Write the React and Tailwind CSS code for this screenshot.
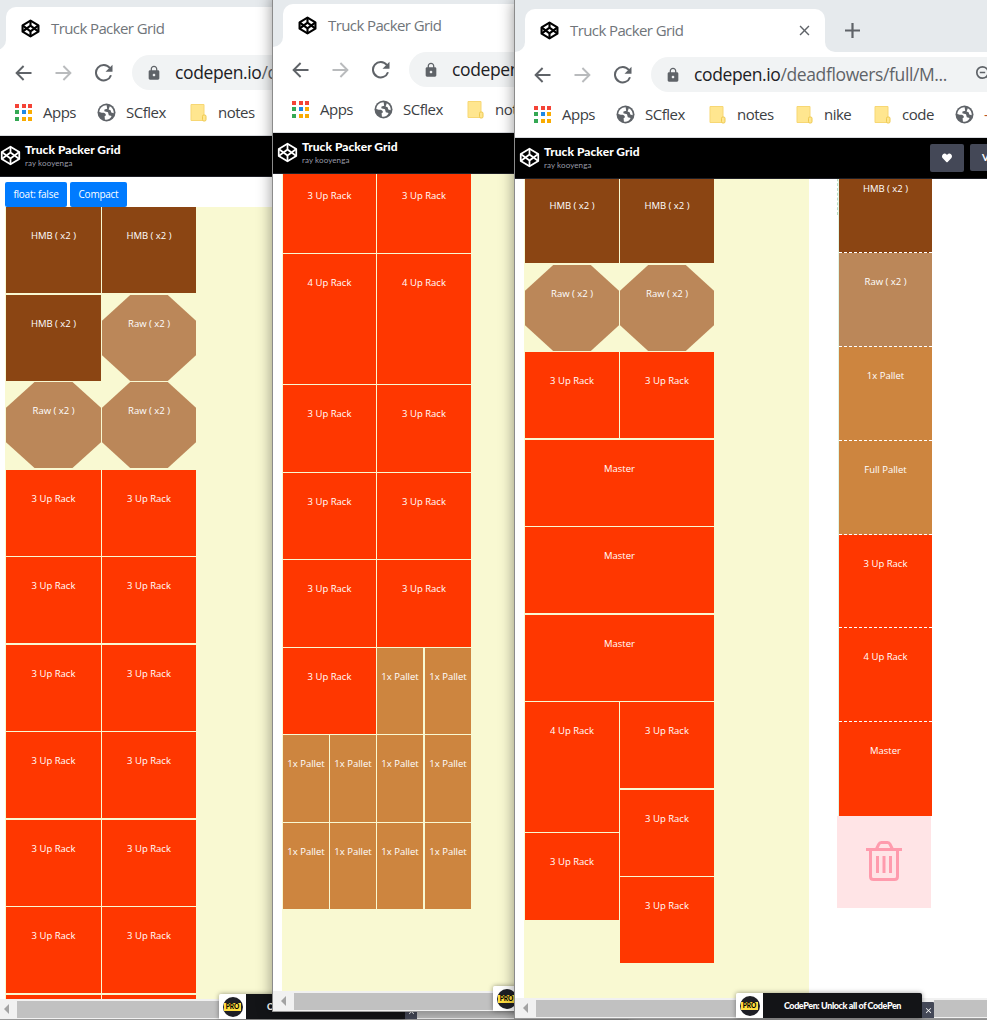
import React from "react";
import { MdLock, MdClose } from "react-icons/md";
import { FaHeart } from "react-icons/fa";

const APP_COLORS = [
  "bg-[#f44336]", "bg-[#f44336]", "bg-[#f44336]",
  "bg-[#34a853]", "bg-[#1e88e5]", "bg-[#f9ab00]",
  "bg-[#34a853]", "bg-[#f9ab00]", "bg-[#f9ab00]",
];

function AppsIcon() {
  return (
    <div className="grid w-[17px] shrink-0 grid-cols-3 gap-[2.5px]">
      {APP_COLORS.map((c, i) => (
        <span key={i} className={`size-[4px] ${c}`} />
      ))}
    </div>
  );
}

function Logo({ className, weight }) {
  return (
    <svg className={`shrink-0 ${className}`} viewBox="0 0 24 24" fill="none" stroke="currentColor" strokeWidth={weight} strokeLinejoin="round">
      <path d="M12 2 22 8 22 16 12 22 2 16 2 8Z" />
      <path d="M12 22V15.5M22 8 12 15.5 2 8M2 16 12 8.5 22 16M12 2V8.5" />
    </svg>
  );
}

function GlobeIcon() {
  return (
    <svg className="size-[19px] shrink-0" viewBox="0 0 19 19">
      <circle cx="9.5" cy="9.5" r="9" fill="#5f6368" />
      <path
        d="M9.6 2.3C5.6 2.2 2.5 5.200 2.300 9.100L4.800 9.700C7.100 9.600 8.700 10.100 9 12.300L7.600 13.300 7.900 16.500C10.500 17.200 13.800 15.700 14.600 13L11.800 12.300 11 9.300 7.300 8.300 7.500 6.500 10.200 5.800Z"
        fill="#fff"
      />
      <path d="M12.800 3.200C15.600 4.700 17 7.300 16.700 10.200L14.300 9.400 13.600 7.200 11.600 6.400Z" fill="#fff" />
    </svg>
  );
}

function NoteIcon() {
  return (
    <svg className="h-[19px] w-[17px] shrink-0" viewBox="0 0 17 19">
      <path d="M1 1.500h13v16H1z" fill="#ffe68f" stroke="#f7d774" />
      <rect x="12.500" y="12" width="3.500" height="6" rx="1.300" fill="#ffe68f" stroke="#eec94f" />
    </svg>
  );
}

function ArrowIcon({ className }) {
  return (
    <svg className={`h-[16px] w-[17px] shrink-0 ${className}`} viewBox="0 0 17 16" fill="none" stroke="currentColor" strokeWidth="1.900">
      <path d="M16.500 8H1.800M8.600 1 1.600 8l7 7" />
    </svg>
  );
}

function ReloadIcon() {
  return (
    <svg className="ml-[23px] size-[18px] shrink-0" viewBox="0 0 18 18">
      <path d="M14.800 4A7.700 7.700 0 1 0 16 11.200" fill="none" stroke="currentColor" strokeWidth="2" />
      <path d="M17.500 0.800V7.800H10.500Z" fill="currentColor" />
    </svg>
  );
}

function ZoomOutIcon() {
  return (
    <svg className="size-[19px] shrink-0" viewBox="0 0 19 19" fill="none" stroke="#5f6368" strokeWidth="1.700">
      <circle cx="7.500" cy="7.500" r="5.700" />
      <path d="M4.800 7.500h5.400M11.700 11.700l5 5" />
    </svg>
  );
}

function TrashIcon() {
  return (
    <svg className="h-[40px] w-[36px]" viewBox="0 0 36 40" fill="none" stroke="currentColor" strokeWidth="3">
      <path d="M0 8.500H36" />
      <path d="M10.500 8 12.800 3.200Q13.500 1.500 15.300 1.500H21.500Q23.300 1.500 24 3.200L26.300 8" />
      <path d="M4.500 8.500V35.500Q4.500 38.500 7.500 38.500H28.500Q31.500 38.500 31.500 35.500V8.500" />
      <path d="M11.500 15V32M18 15V32M24.500 15V32" />
    </svg>
  );
}

function Bookmark({ icon, label, className }) {
  return (
    <div className={`flex shrink-0 items-center ${className}`}>
      <div className="flex w-[19px] shrink-0 justify-center">{icon}</div>
      <span className="ml-[10px] whitespace-nowrap">{label}</span>
    </div>
  );
}

function Browser({ className, headerActions, bodyClass, children, promo }) {
  return (
    <section className={`absolute flex flex-col overflow-visible border-l border-[#8b8b8b] bg-white shadow-[0_0_14px_rgba(0,0,0,0.42)] ${className}`}>
      <div className="flex h-[52px] shrink-0 items-end overflow-hidden bg-[#e6eaed]">
        <div className="h-3 w-[10px] shrink-0 bg-white">
          <div className="h-full rounded-br-[10px] bg-[#e6eaed]" />
        </div>
        <div className="flex h-[43px] w-[300px] shrink-0 items-center rounded-t-[10px] bg-white pr-3 pl-[15px]">
          <Logo weight={2.7} className="size-[19px] text-black" />
          <span className="ml-[11px] text-[15px] tracking-[-0.6px] whitespace-nowrap text-[#70757a]">Truck Packer Grid</span>
          <MdClose size={17} className="ml-auto text-[#5f6368]" />
        </div>
        <div className="h-3 w-[10px] shrink-0 bg-white">
          <div className="h-full rounded-bl-[10px] bg-[#e6eaed]" />
        </div>
        <svg className="mb-[14px] ml-[10px] size-[15px] shrink-0" viewBox="0 0 15 15" stroke="#5f6368" strokeWidth="2.200">
          <path d="M0 7.500H15M7.500 0V15" />
        </svg>
      </div>
      <div className="flex h-[45px] shrink-0 items-center overflow-hidden pl-[19px] text-[#5f6368]">
        <ArrowIcon />
        <ArrowIcon className="ml-[23px] rotate-180 text-[#b9bbbd]" />
        <ReloadIcon />
        <div className="ml-[19px] flex h-[35px] w-[420px] shrink-0 items-center rounded-full bg-[#f1f3f4] pl-[14px] text-[17.5px]">
          <MdLock size={16} className="shrink-0" />
          <span className="ml-[13px] w-[281px] shrink-0 tracking-[-0.38px] whitespace-nowrap">
            <span className="text-[#202124]">codepen.io</span>/deadflowers/full/M...
          </span>
          <ZoomOutIcon />
        </div>
      </div>
      <div className="flex h-[41px] shrink-0 items-center overflow-hidden border-b border-[#dadce0] pb-[6px] pl-[18px] text-[15px] tracking-[-0.5px] text-[#3c4043]">
        <Bookmark icon={<AppsIcon />} label="Apps" className="w-[83px]" />
        <Bookmark icon={<GlobeIcon />} label="SCflex" className="w-[92px]" />
        <Bookmark icon={<NoteIcon />} label="notes" className="w-[87px]" />
        <Bookmark icon={<NoteIcon />} label="nike" className="w-[78px]" />
        <Bookmark icon={<NoteIcon />} label="code" className="w-[82px]" />
        <Bookmark icon={<GlobeIcon />} label={<span className="text-[#b5532d]">-</span>} className="w-[60px]" />
      </div>
      <header className="flex h-[41px] shrink-0 items-start overflow-hidden border-b border-[#1e1f26] bg-black pl-1 font-['Lato',sans-serif]">
        <Logo weight={2} className="mt-[9px] size-[21px] text-white" />
        <div className="mt-[7px] ml-[4px] w-[386px] shrink-0">
          <div className="text-[12px] leading-[14px] font-black tracking-[0.05px] text-white">Truck Packer Grid</div>
          <div className="mt-[1px] text-[8px] leading-[10px] tracking-[0.1px] text-[#9a9ca8]">ray kooyenga</div>
        </div>
        {headerActions}
      </header>
      <main className={`min-h-0 flex-1 overflow-hidden ${bodyClass}`}>{children}</main>
      <div className="flex h-[21px] shrink-0 items-stretch border-b border-[#999] bg-[#f1f1f1]">
        <div className="flex w-[21px] shrink-0 items-center justify-center">
          <span className="border-y-[5px] border-r-[5px] border-y-transparent border-r-[#a3a3a3]" />
        </div>
        <div className={`mt-[2px] mb-[1px] shrink-0 bg-[#c1c1c1] ${promo}`} />
        <div className="-mt-[5px] flex h-[25px] shrink-0 items-end">
          <div className="flex h-full rounded-t-[2px] shadow-[0_0_5px_rgba(0,0,0,0.4)]">
            <div className="flex w-[27px] items-center justify-center rounded-tl-[2px] bg-white">
              <div className="flex size-5 items-center justify-center rounded-full bg-[#1e1f26]">
                <span className="bg-[#ffdd40] px-[1.5px] font-['Lato',sans-serif] text-[6.5px] leading-[8px] font-black text-black">PRO</span>
              </div>
            </div>
            <div className="flex w-[159px] items-center justify-center rounded-tr-[2px] bg-[#131417] font-['Lato',sans-serif] text-[9px] font-black tracking-[-0.4px] whitespace-nowrap text-white">
              CodePen: Unlock all of CodePen
            </div>
          </div>
          <div className="flex h-[16px] w-3 items-center justify-center rounded-tr-[1px] bg-[#444857] text-white">
            <MdClose size={9} />
          </div>
        </div>
        <div className="mt-[2px] mb-[1px] flex-1 bg-[#c1c1c1]" />
      </div>
    </section>
  );
}

const KINDS = {
  hmb: ["HMB ( x2 )", "bg-[#8b4513]"],
  raw: ["Raw ( x2 )", "bg-[#bb8759] [clip-path:polygon(30%_0%,70%_0%,100%_30%,100%_70%,70%_100%,30%_100%,0%_70%,0%_30%)]"],
  r3: ["3 Up Rack", "bg-[#ff3700]"],
  r4: ["4 Up Rack", "bg-[#ff3700]"],
  m: ["Master", "bg-[#ff3700]"],
  p: ["1x Pallet", "bg-[#cd853f]"],
};

function Cell({ kind, className = "" }) {
  const [label, look] = KINDS[kind];
  return (
    <div className={`flex min-w-0 justify-center pt-[21px] text-[9.5px] leading-[15px] font-medium whitespace-nowrap text-white ${look} ${className}`}>
      {label}
    </div>
  );
}

function Row({ kinds, className = "h-[86px]", cols = "grid-cols-[95px_94px]" }) {
  return (
    <div className={`grid shrink-0 gap-x-px ${cols} ${className}`}>
      {kinds.map((k, i) => (
        <Cell key={i} kind={k} />
      ))}
    </div>
  );
}

const FIRST = [
  ["hmb", "hmb"], ["hmb", "raw"], ["raw", "raw"],
  ["r3", "r3"], ["r3", "r3"], ["r3", "r3"], ["r3", "r3"], ["r3", "r3"], ["r3", "r3"],
];

function LeftGrid() {
  return (
    <>
      <div className="flex h-[30px] shrink-0 items-end gap-[3px] text-[10px] font-medium text-white">
        <button className="h-[25px] w-[62px] rounded-[2px] bg-[#007bff] tracking-[-0.25px]">float: false</button>
        <button className="h-[25px] w-[57px] rounded-[2px] bg-[#007bff] tracking-[-0.25px]">Compact</button>
      </div>
      <div className="h-full w-[285px] bg-[#f9f9d2] pl-px">
        {FIRST.map((kinds, i) => (
          <Row key={i} kinds={kinds} className={i % 2 ? "mb-px h-[86px]" : "mb-[2px] h-[86px]"} />
        ))}
        <div className="grid h-[86px] grid-cols-[95px_94px] gap-x-px">
          <div className="bg-[#ff3700]" />
          <div className="bg-[#ff3700]" />
        </div>
      </div>
    </>
  );
}

function MiddleGrid() {
  const two = "grid-cols-[93px_94px]";
  return (
    <div className="flex h-full w-[285px] flex-col gap-px bg-[#f9f9d2] pl-px">
      <Row kinds={["r3", "r3"]} cols={two} className="-mt-[7px] h-[86px]" />
      <Row kinds={["r4", "r4"]} cols={two} className="h-[130px]" />
      <Row kinds={["r3", "r3"]} cols={two} className="h-[87px]" />
      <Row kinds={["r3", "r3"]} cols={two} />
      <Row kinds={["r3", "r3"]} cols={two} className="h-[87px]" />
      <div className="flex h-[86px] shrink-0 gap-px">
        <Cell kind="r3" className="w-[93px]" />
        <Cell kind="p" className="mr-px w-[46px]" />
        <Cell kind="p" className="w-[46px]" />
      </div>
      {["h-[87px]", "h-[86px]"].map((h) => (
        <div key={h} className={`flex shrink-0 gap-px ${h}`}>
          <Cell kind="p" className="w-[46px]" />
          <Cell kind="p" className="w-[46px]" />
          <Cell kind="p" className="mr-px w-[46px]" />
          <Cell kind="p" className="w-[46px]" />
        </div>
      ))}
    </div>
  );
}

const PALETTE = [
  ["HMB ( x2 )", "bg-[#8b4513] h-[94px] pt-[22px]"],
  ["Raw ( x2 )", "bg-[#bb8759] h-[94px] pt-[21px]"],
  ["1x Pallet", "bg-[#cd853f] h-[94px] pt-[21px]"],
  ["Full Pallet", "bg-[#cd853f] h-[94px] pt-[21px]"],
  ["3 Up Rack", "bg-[#ff3700] h-[93px] pt-[21px]"],
  ["4 Up Rack", "bg-[#ff3700] h-[94px] pt-[21px]"],
  ["Master", "bg-[#ff3700] h-[94px] pt-[21px] border-b-transparent"],
];

function RightGrid() {
  const two = "grid-cols-[94px_94px]";
  return (
    <>
      <div className="flex h-full w-[285px] shrink-0 flex-col bg-[#f9f9d2] pl-px">
        <Row kinds={["hmb", "hmb"]} cols={two} className="-mt-[2px] mb-[2px] h-[86px]" />
        <Row kinds={["raw", "raw"]} cols={two} className="mb-px h-[86px]" />
        <Row kinds={["r3", "r3"]} cols={two} className="mb-[2px] h-[86px]" />
        <Row kinds={["m"]} cols="grid-cols-[189px]" className="mb-px h-[86px]" />
        <Row kinds={["m"]} cols="grid-cols-[189px]" className="mb-[2px] h-[86px]" />
        <Row kinds={["m"]} cols="grid-cols-[189px]" className="mb-px h-[86px]" />
        <div className="flex shrink-0 gap-px">
          <div className="flex w-[94px] flex-col gap-px">
            <Cell kind="r4" className="h-[130px]" />
            <Cell kind="r3" className="h-[87px]" />
          </div>
          <div className="flex w-[94px] flex-col">
            <Cell kind="r3" className="mb-[2px] h-[86px]" />
            <Cell kind="r3" className="mb-px h-[86px]" />
            <Cell kind="r3" className="h-[86px]" />
          </div>
        </div>
      </div>
      <div className="ml-[28px] flex w-[95px] shrink-0 flex-col">
        <div className="-mt-[20px] flex">
          <div className="h-[56px] shrink-0 border-l border-dashed border-[#b9dcc4]" />
          <div className="border-l border-[#e2f5e6]">
            {PALETTE.map(([label, look]) => (
              <div key={label} className={`flex w-[93px] justify-center border-b border-dashed border-white text-[9.5px] leading-[15px] font-medium whitespace-nowrap text-white ${look}`}>
                {label}
              </div>
            ))}
          </div>
        </div>
        <div className="flex h-[92px] w-[94px] items-center justify-center bg-[#ffe4e6] pb-[2px] text-[#ff9bad]">
          <TrashIcon />
        </div>
      </div>
    </>
  );
}

export default function App() {
  return (
    <div className="relative h-[1020px] w-[987px] overflow-hidden bg-[#b5b5b5] font-['Open_Sans','Noto_Sans',sans-serif]">
      <Browser className="top-[-2px] left-[-5px] h-[1022px] w-[633px]" bodyClass="pl-[9px]" promo="w-[202px]">
        <LeftGrid />
      </Browser>
      <Browser className="top-[-5px] left-[272px] h-[1017px] w-[500px]" bodyClass="pl-[9px]" promo="w-[199px]">
        <MiddleGrid />
      </Browser>
      <Browser
        className="top-0 left-[514px] h-[1019px] w-[500px]"
        bodyClass="flex pl-[9px]"
        promo="w-[200px]"
        headerActions={
          <>
            <div className="mt-[6px] flex h-[28px] w-[34px] shrink-0 items-center justify-center rounded-[2px] bg-[#444857] text-white">
              <FaHeart size={10} />
            </div>
            <div className="mt-[6px] ml-[6px] flex h-[27px] w-[60px] shrink-0 items-center rounded-[2px] bg-[#444857] pl-[12px] text-[10px] font-bold text-white">
              View
            </div>
          </>
        }
      >
        <RightGrid />
      </Browser>
    </div>
  );
}
